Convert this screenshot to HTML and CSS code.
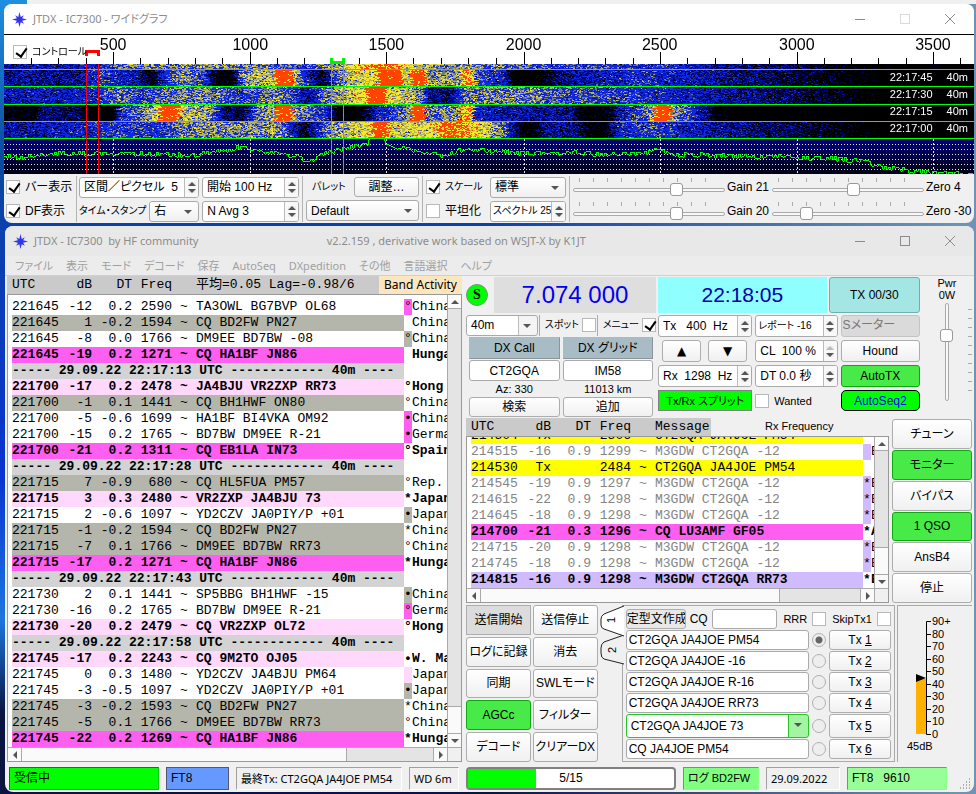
FILE: index.html
```html
<!DOCTYPE html>
<html lang="ja">
<head>
    <meta charset="UTF-8">
    <meta name="viewport" content="width=device-width, initial-scale=1.0">
    <title>JTDX</title>
    <link rel="stylesheet" href="styles.css">
</head>
<body>

    <!-- ワイドグラフ -->
    <section class="window wide-graph">
        <header class="titlebar">
            <svg class="logo" viewBox="0 0 16 16"><path d="M8 0l1.3 5.2L12.6 3.400 10.800 6.700 16 8l-5.200 1.300 1.800 3.300-3.300-1.800L8 16l-1.300-5.200-3.300 1.800 1.800-3.300L0 8l5.200-1.300L3.400 3.400l3.300 1.800z" fill="#3434e8"/></svg>
            <h1>JTDX - IC7300 - ワイドグラフ</h1>
            <div class="win-buttons">
                <button aria-label="最小化"><svg viewBox="0 0 12 12"><path d="M1 6.500h10"/></svg></button>
                <button aria-label="最大化" disabled><svg viewBox="0 0 12 12"><rect x="1.500" y="1.500" width="9" height="9"/></svg></button>
                <button aria-label="閉じる"><svg viewBox="0 0 12 12"><path d="M1 1l10 10M11 1L1 11"/></svg></button>
            </div>
        </header>

        <div class="plot">
            <canvas id="waterfall"></canvas>
            <label class="check plot-control"><input type="checkbox" checked><span class="small">コントロール</span></label>
            <div class="scale" id="scale">
                <span data-hz="500">500</span>
                <span data-hz="1000">1000</span>
                <span data-hz="1500">1500</span>
                <span data-hz="2000">2000</span>
                <span data-hz="2500">2500</span>
                <span data-hz="3000">3000</span>
                <span data-hz="3500">3500</span>
            </div>
            <div class="stamps">
                <p><span>22:17:45</span><span>40m</span></p>
                <p><span>22:17:30</span><span>40m</span></p>
                <p><span>22:17:15</span><span>40m</span></p>
                <p><span>22:17:00</span><span>40m</span></p>
            </div>
        </div>

        <div class="graph-controls">
            <div class="group checks">
                <label class="check"><input type="checkbox" checked>バー表示</label>
                <label class="check"><input type="checkbox" checked>DF表示</label>
            </div>
            <div class="group bins">
                <div class="line">
                    <div class="spin grow"><input type="text" value="区間／ピクセル  5" aria-label="区間／ピクセル"><div class="arrows"><button aria-label="増"></button><button aria-label="減"></button></div></div>
                    <div class="spin bin-right"><input type="text" value="開始 100 Hz" aria-label="開始"><div class="arrows"><button aria-label="増"></button><button aria-label="減"></button></div></div>
                </div>
                <div class="line">
                    <label class="small grow" for="stamp">タイム・スタンプ</label>
                    <div class="combo stamp-combo"><select id="stamp"><option>右</option></select></div>
                    <div class="spin bin-right"><input type="text" value="N Avg 3" aria-label="N Avg"><div class="arrows"><button aria-label="増"></button><button aria-label="減"></button></div></div>
                </div>
            </div>
            <div class="group palette">
                <div class="line"><label class="small palette-label" for="palette">パレット</label><button class="btn grow">調整…</button></div>
                <div class="combo"><select id="palette"><option>Default</option></select></div>
            </div>
            <div class="group flatten">
                <div class="line">
                    <label class="check grow"><input type="checkbox" checked><span class="small">スケール</span></label>
                    <div class="combo flatten-right"><select aria-label="スケール"><option>標準</option></select></div>
                </div>
                <div class="line">
                    <label class="check grow"><input type="checkbox">平坦化</label>
                    <div class="spin flatten-right"><input class="small" type="text" value="スペクトル 25" aria-label="スペクトル"><div class="arrows"><button aria-label="増"></button><button aria-label="減"></button></div></div>
                </div>
            </div>
            <div class="group sliders">
                <div class="slider"><input id="gain1" type="range" value="70"></div><label for="gain1">Gain 21</label>
                <div class="slider"><input id="zero1" type="range" value="54"></div><label for="zero1">Zero 4</label>
                <div class="slider"><input id="gain2" type="range" value="70"></div><label for="gain2">Gain 20</label>
                <div class="slider"><input id="zero2" type="range" value="20"></div><label for="zero2">Zero -30</label>
            </div>
        </div>
    </section>

    <!-- メインウィンドウ -->
    <section class="window main-window">
        <header class="titlebar">
            <svg class="logo" viewBox="0 0 16 16"><path d="M8 0l1.3 5.2L12.6 3.400 10.800 6.700 16 8l-5.200 1.300 1.800 3.300-3.300-1.800L8 16l-1.300-5.200-3.300 1.800 1.800-3.300L0 8l5.200-1.300L3.400 3.400l3.300 1.800z" fill="#3434e8"/></svg>
            <h1>JTDX - IC7300&nbsp; by HF community</h1>
            <p class="version">v2.2.159 , derivative work based on WSJT-X by K1JT</p>
            <div class="win-buttons">
                <button aria-label="最小化"><svg viewBox="0 0 12 12"><path d="M1 6.500h10"/></svg></button>
                <button aria-label="最大化"><svg viewBox="0 0 12 12"><rect x="1.500" y="1.500" width="9" height="9"/></svg></button>
                <button aria-label="閉じる"><svg viewBox="0 0 12 12"><path d="M1 1l10 10M11 1L1 11"/></svg></button>
            </div>
        </header>
        <nav class="menubar">
            <a href="#">ファイル</a><a href="#">表示</a><a href="#">モード</a><a href="#">デコード</a><a href="#">保存</a><a href="#">AutoSeq</a><a href="#">DXpedition</a><a href="#">その他</a><a href="#">言語選択</a><a href="#">ヘルプ</a>
        </nav>

        <div class="panes">
            <!-- バンドアクティビティ -->
            <div class="band-pane">
                <div class="list-head">
                    <span class="utc">UTC</span><span class="db">dB</span><span class="dt">DT</span><span class="freq">Freq</span><span class="avg">平均=0.05 Lag=-0.98/6</span>
                    <strong class="band-label">Band Activity</strong>
                </div>
                <div class="list-frame">
                    <div class="view">
                        <table class="decodes">
                            <colgroup><col class="utc"><col class="db"><col class="dt"><col class="freq"><col class="tilde"><col class="msg"><col class="mark"><col></colgroup>
                            <tr><td>221645</td><td>-12</td><td>0.2</td><td>2590</td><td>~</td><td>TA3OWL BG7BVP OL68</td><td class="cq">°</td><td>China</td></tr>
                            <tr class="gray"><td>221645</td><td>1</td><td>-0.2</td><td>1594</td><td>~</td><td>CQ BD2FW PN27</td><td></td><td>China</td></tr>
                            <tr><td>221645</td><td>-8</td><td>0.0</td><td>1766</td><td>~</td><td>DM9EE BD7BW -08</td><td class="worked">°</td><td>China</td></tr>
                            <tr class="hot"><td>221645</td><td>-19</td><td>0.2</td><td>1271</td><td>~</td><td>CQ HA1BF JN86</td><td></td><td>Hunga</td></tr>
                            <tr class="sep"><td colspan="6">----- 29.09.22 22:17:13 UTC ------------ 40m ----</td><td></td><td></td></tr>
                            <tr class="pink"><td>221700</td><td>-17</td><td>0.2</td><td>2478</td><td>~</td><td>JA4BJU VR2ZXP RR73</td><td>°</td><td>Hong</td></tr>
                            <tr class="gray"><td>221700</td><td>-1</td><td>0.1</td><td>1441</td><td>~</td><td>CQ BH1HWF ON80</td><td>°</td><td>China</td></tr>
                            <tr><td>221700</td><td>-5</td><td>-0.6</td><td>1699</td><td>~</td><td>HA1BF BI4VKA OM92</td><td class="cq">•</td><td>China</td></tr>
                            <tr><td>221700</td><td>-15</td><td>0.2</td><td>1765</td><td>~</td><td>BD7BW DM9EE R-21</td><td class="cq">•</td><td>Germa</td></tr>
                            <tr class="hot"><td>221700</td><td>-21</td><td>0.2</td><td>1311</td><td>~</td><td>CQ EB1LA IN73</td><td>°</td><td>Spain</td></tr>
                            <tr class="sep"><td colspan="6">----- 29.09.22 22:17:28 UTC ------------ 40m ----</td><td></td><td></td></tr>
                            <tr class="gray"><td>221715</td><td>7</td><td>-0.9</td><td>680</td><td>~</td><td>CQ HL5FUA PM57</td><td>°</td><td>Rep.</td></tr>
                            <tr class="pink"><td>221715</td><td>3</td><td>0.3</td><td>2480</td><td>~</td><td>VR2ZXP JA4BJU 73</td><td>*</td><td>Japan</td></tr>
                            <tr><td>221715</td><td>2</td><td>-0.6</td><td>1097</td><td>~</td><td>YD2CZV JA0PIY/P +01</td><td class="worked">•</td><td>Japan</td></tr>
                            <tr class="gray"><td>221715</td><td>-1</td><td>-0.2</td><td>1594</td><td>~</td><td>CQ BD2FW PN27</td><td>*</td><td>China</td></tr>
                            <tr class="gray"><td>221715</td><td>-7</td><td>0.1</td><td>1766</td><td>~</td><td>DM9EE BD7BW RR73</td><td>°</td><td>China</td></tr>
                            <tr class="hot"><td>221715</td><td>-17</td><td>0.2</td><td>1271</td><td>~</td><td>CQ HA1BF JN86</td><td>*</td><td>Hunga</td></tr>
                            <tr class="sep"><td colspan="6">----- 29.09.22 22:17:43 UTC ------------ 40m ----</td><td></td><td></td></tr>
                            <tr><td>221730</td><td>2</td><td>0.1</td><td>1441</td><td>~</td><td>SP5BBG BH1HWF -15</td><td class="worked">•</td><td>China</td></tr>
                            <tr><td>221730</td><td>-16</td><td>0.2</td><td>1765</td><td>~</td><td>BD7BW DM9EE R-21</td><td class="cq">°</td><td>Germa</td></tr>
                            <tr class="pink"><td>221730</td><td>-20</td><td>0.2</td><td>2479</td><td>~</td><td>CQ VR2ZXP OL72</td><td>°</td><td>Hong</td></tr>
                            <tr class="sep"><td colspan="6">----- 29.09.22 22:17:58 UTC ------------ 40m ----</td><td></td><td></td></tr>
                            <tr class="pink"><td>221745</td><td>-17</td><td>0.2</td><td>2243</td><td>~</td><td>CQ 9M2TO OJ05</td><td>•</td><td>W. Ma</td></tr>
                            <tr><td>221745</td><td>0</td><td>0.3</td><td>1480</td><td>~</td><td>YD2CZV JA4BJU PM64</td><td class="new"></td><td>Japan</td></tr>
                            <tr><td>221745</td><td>-3</td><td>-0.5</td><td>1097</td><td>~</td><td>YD2CZV JA0PIY/P +01</td><td class="worked">•</td><td>Japan</td></tr>
                            <tr class="gray"><td>221745</td><td>-3</td><td>-0.2</td><td>1593</td><td>~</td><td>CQ BD2FW PN27</td><td>*</td><td>China</td></tr>
                            <tr class="gray"><td>221745</td><td>-5</td><td>0.1</td><td>1766</td><td>~</td><td>DM9EE BD7BW RR73</td><td>°</td><td>China</td></tr>
                            <tr class="hot"><td>221745</td><td>-22</td><td>0.2</td><td>1269</td><td>~</td><td>CQ HA1BF JN86</td><td>*</td><td>Hunga</td></tr>
                        </table>
                    </div>
                    <div class="vscroll"><button class="up" aria-label="上へ"></button><div class="track"><div class="thumb band-thumb"></div></div><button class="down" aria-label="下へ"></button></div>
                    <div class="hscroll"><button class="left" aria-label="左へ"></button><div class="track"><div class="thumb"></div></div><button class="right" aria-label="右へ"></button></div>
                    <div class="corner"></div>
                </div>
            </div>

            <div class="right-pane">
                <div class="rig">
                    <div class="rig-left">
                        <div class="line dial"><span class="badge">S</span><output class="dial-freq">7.074 000</output></div>
                        <div class="line band-line">
                            <div class="combo boxed band-combo"><select aria-label="バンド"><option>40m</option></select></div>
                            <label class="check small spot">スポット<input type="checkbox"></label>
                            <label class="check small menu-check">メニュー<input type="checkbox" checked></label>
                        </div>
                        <div class="dx">
                            <button class="btn steel">DX Call</button><button class="btn steel">DX グリッド</button>
                            <input class="field" type="text" value="CT2GQA" aria-label="DX Call"><input class="field" type="text" value="IM58" aria-label="DX グリッド">
                            <span class="az">Az: 330</span><span class="az">11013 km</span>
                            <button class="btn">検索</button><button class="btn">追加</button>
                        </div>
                    </div>
                    <div class="rig-mid">
                        <div class="line clock-line"><output class="clock">22:18:05</output><button class="btn tx-slot">TX 00/30</button></div>
                        <div class="rig-grid">
                            <div class="spin"><input type="text" value="Tx   400  Hz" aria-label="Tx"><div class="arrows"><button aria-label="増"></button><button aria-label="減"></button></div></div>
                            <div class="spin"><input class="small" type="text" value="レポート -16" aria-label="レポート"><div class="arrows"><button aria-label="増"></button><button aria-label="減"></button></div></div>
                            <div class="s-meter">Sメーター</div>
                            <div class="line nudge"><button class="btn">▲</button><button class="btn">▼</button></div>
                            <div class="spin"><input type="text" value="CL  100 %" aria-label="CL"><div class="arrows at-max"><button aria-label="増"></button><button aria-label="減"></button></div></div>
                            <button class="btn">Hound</button>
                            <div class="spin"><input type="text" value="Rx  1298  Hz" aria-label="Rx"><div class="arrows"><button aria-label="増"></button><button aria-label="減"></button></div></div>
                            <div class="spin"><input type="text" value="DT 0.0 秒" aria-label="DT"><div class="arrows"><button aria-label="増"></button><button aria-label="減"></button></div></div>
                            <button class="btn green">AutoTX</button>
                            <button class="btn split">Tx/Rx スプリット</button>
                            <label class="check wanted"><input type="checkbox">Wanted</label>
                            <button class="btn autoseq">AutoSeq2</button>
                        </div>
                    </div>
                    <div class="pwr">
                        <label for="pwr">Pwr<br>0W</label>
                        <div class="pwr-slider"><input id="pwr" type="range" value="70"></div>
                    </div>
                </div>

                <div class="rx-area">
                    <div class="rx-pane">
                        <div class="rx-head">
                            <div class="list-head"><span class="utc">UTC</span><span class="db">dB</span><span class="dt">DT</span><span class="freq">Freq</span><span class="avg">Message</span></div>
                            <strong>Rx Frequency</strong>
                        </div>
                        <div class="list-frame">
                            <div class="view">
                                <table class="decodes">
                                    <colgroup><col class="utc"><col class="db"><col class="dt"><col class="freq"><col class="tilde"><col class="msg"><col class="mark"><col></colgroup>
                                    <tr class="tx"><td>214504</td><td>Tx</td><td></td><td>2506</td><td>~</td><td>CT2GQA JA4JOE PM54</td><td></td><td></td></tr>
                                    <tr class="old"><td>214515</td><td>-16</td><td>0.9</td><td>1299</td><td>~</td><td>M3GDW CT2GQA -12</td><td class="mine"></td><td>E</td></tr>
                                    <tr class="tx"><td>214530</td><td>Tx</td><td></td><td>2484</td><td>~</td><td>CT2GQA JA4JOE PM54</td><td></td><td></td></tr>
                                    <tr class="old"><td>214545</td><td>-19</td><td>0.9</td><td>1297</td><td>~</td><td>M3GDW CT2GQA -12</td><td class="mine">*</td><td>E</td></tr>
                                    <tr class="old"><td>214615</td><td>-22</td><td>0.9</td><td>1298</td><td>~</td><td>M3GDW CT2GQA -12</td><td class="mine">*</td><td>E</td></tr>
                                    <tr class="old"><td>214645</td><td>-18</td><td>0.9</td><td>1298</td><td>~</td><td>M3GDW CT2GQA -12</td><td class="mine">*</td><td>E</td></tr>
                                    <tr class="hot"><td>214700</td><td>-21</td><td>0.3</td><td>1296</td><td>~</td><td>CQ LU3AMF GF05</td><td>*</td><td>A</td></tr>
                                    <tr class="old"><td>214715</td><td>-20</td><td>0.9</td><td>1298</td><td>~</td><td>M3GDW CT2GQA -12</td><td class="mine">*</td><td>E</td></tr>
                                    <tr class="old"><td>214745</td><td>-18</td><td>0.9</td><td>1298</td><td>~</td><td>M3GDW CT2GQA -12</td><td class="mine">*</td><td>E</td></tr>
                                    <tr class="lilac"><td>214815</td><td>-16</td><td>0.9</td><td>1298</td><td>~</td><td>M3GDW CT2GQA RR73</td><td>*</td><td>E</td></tr>
                                </table>
                            </div>
                            <div class="vscroll"><button class="up" aria-label="上へ"></button><div class="track"><div class="thumb band-thumb"></div></div><button class="down" aria-label="下へ"></button></div>
                            <div class="hscroll"><button class="left" aria-label="左へ"></button><div class="track"><div class="thumb"></div></div><button class="right" aria-label="右へ"></button></div>
                            <div class="corner"></div>
                        </div>
                    </div>
                    <div class="side-buttons">
                        <button class="btn">チューン</button>
                        <button class="btn green">モニター</button>
                        <button class="btn">バイパス</button>
                        <button class="btn green">1 QSO</button>
                        <button class="btn">AnsB4</button>
                        <button class="btn">停止</button>
                    </div>
                </div>

                <div class="bottom">
                    <div class="actions">
                        <button class="btn pressed">送信開始</button><button class="btn">送信停止</button>
                        <button class="btn">ログに記録</button><button class="btn">消去</button>
                        <button class="btn">同期</button><button class="btn">SWLモード</button>
                        <button class="btn green">AGCc</button><button class="btn">フィルター</button>
                        <button class="btn">デコード</button><button class="btn">クリアーDX</button>
                    </div>
                    <svg class="tabs" viewBox="0 0 24 60">
                        <path d="M24 30L4 37Q1 39 1 43V48Q1 53 4 54L24 59" fill="#f0f0f0" stroke="#222"/>
                        <path d="M24 1L4 9Q1 11 1 14V20Q1 23 4 24L24 31" fill="#fff" stroke="#222"/>
                        <text x="0" y="0" transform="translate(15 18) rotate(-90)">1</text>
                        <text x="0" y="0" transform="translate(16 48) rotate(-90)">2</text>
                    </svg>
                    <div class="messages">
                        <div class="line cq-line">
                            <button class="btn gen">定型文作成</button>
                            <label for="cq">CQ</label><input class="field" id="cq" type="text">
                            <label class="check">RRR<input type="checkbox"></label>
                            <label class="check">SkipTx1<input type="checkbox"></label>
                        </div>
                        <div class="tx-rows">
                            <input class="field" type="text" value="CT2GQA JA4JOE PM54" aria-label="Tx 1"><input type="radio" name="tx" aria-label="Tx 1" checked><button class="btn">Tx <u>1</u></button>
                            <input class="field" type="text" value="CT2GQA JA4JOE -16" aria-label="Tx 2"><input type="radio" name="tx" aria-label="Tx 2"><button class="btn">Tx <u>2</u></button>
                            <input class="field" type="text" value="CT2GQA JA4JOE R-16" aria-label="Tx 3"><input type="radio" name="tx" aria-label="Tx 3"><button class="btn">Tx <u>3</u></button>
                            <input class="field" type="text" value="CT2GQA JA4JOE RR73" aria-label="Tx 4"><input type="radio" name="tx" aria-label="Tx 4"><button class="btn">Tx <u>4</u></button>
                            <div class="combo boxed tx5"><select aria-label="Tx 5"><option>CT2GQA JA4JOE 73</option></select></div><input type="radio" name="tx" aria-label="Tx 5"><button class="btn">Tx <u>5</u></button>
                            <input class="field" type="text" value="CQ JA4JOE PM54" aria-label="Tx 6"><input type="radio" name="tx" aria-label="Tx 6"><button class="btn">Tx <u>6</u></button>
                        </div>
                    </div>
                    <div class="meter">
                        <svg viewBox="0 0 74 156">
                            <rect x="18" y="73" width="10" height="55" fill="#ffb000"/>
                            <path d="M18 68l10 4-10 4z" fill="#000"/>
                            <path d="M33 15.500h-4.500v113H33M28.500 28.500H33M28.500 40.500H33M28.500 53.500H33M28.500 65.500H33M28.500 78.500H33M28.500 90.500H33M28.500 103.500H33M28.500 115.500H33" fill="none" stroke="#000"/>
                            <text x="34" y="19">90+</text>
                            <text x="34" y="32">80</text>
                            <text x="34" y="44">70</text>
                            <text x="34" y="57">60</text>
                            <text x="34" y="69">50</text>
                            <text x="34" y="82">40</text>
                            <text x="34" y="94">30</text>
                            <text x="34" y="107">20</text>
                            <text x="34" y="119">10</text>
                            <text x="34" y="132">0</text>
                            <text x="9" y="144">45dB</text>
                        </svg>
                    </div>
                </div>
            </div>
        </div>

        <footer class="statusbar">
            <div class="status-left">
                <span class="cell receiving">受信中</span>
                <span class="cell mode">FT8</span>
                <span class="cell last-tx">最終Tx: CT2GQA JA4JOE PM54</span>
                <span class="cell watchdog">WD 6m</span>
            </div>
            <div class="status-right">
                <div class="progress"><div class="bar" style="width: 33%"></div><span>5/15</span></div>
                <span class="cell logged">ログ BD2FW</span>
                <span class="cell date">29.09.2022</span>
                <span class="cell count">FT8&nbsp;&nbsp; 9610</span>
                <svg class="grip" viewBox="0 0 12 12"><path d="M10 1h1M7 4h1M10 4h1M4 7h1M7 7h1M10 7h1M1 10h1M4 10h1M7 10h1M10 10h1" stroke="#999" stroke-width="1.500"/></svg>
            </div>
        </footer>
    </section>

    <script src="waterfall.js"></script>
</body>
</html>
```

FILE: styles.css
```css
* {
    box-sizing: border-box;
}

body {
    margin: 0;
    height: 100vh;
    padding: 4px 2px 2px 4px;
    display: flex;
    flex-direction: column;
    gap: 3px;
    font-family: "Liberation Sans", "Noto Sans CJK JP", sans-serif;
    font-size: 12px;
    font-feature-settings: "palt";
    line-height: 14px;
    color: #000;
    background:
        linear-gradient(90deg, transparent 27px, #f0f0f0 27px) top / 100% 4px no-repeat,
        linear-gradient(90deg, transparent 50%, #6f93b4 98%),
        linear-gradient(180deg, #1f8fe0, #0a4aa0 20%, #0c3fae 30%, #0a34d0 60%, #1c76e0 78%, #0a1440 90%);
}

h1, p {
    margin: 0;
    font-weight: normal;
}

button, input, select {
    font: inherit;
    font-feature-settings: inherit;
    color: inherit;
    margin: 0;
    padding: 0;
    border: 0;
    min-width: 0;
    border-radius: 0;
}

.small {
    font-size: 10px;
    white-space: nowrap;
}

.grow {
    flex: 1;
}

.line {
    display: flex;
    align-items: center;
}

/* ウィンドウ枠 */
.window {
    flex: none;
    border-radius: 8px;
    overflow: hidden;
    background: #f0f0f0;
}

.titlebar {
    flex: none;
    height: 30px;
    display: flex;
    align-items: center;
    padding: 0 18px 0 8px;
    gap: 6px;
    background: #fff;
    color: #8c8c8c;
    font-family: "Noto Sans", "Noto Sans CJK JP", sans-serif;
    font-size: 11px;
}

.titlebar h1 {
    font-size: 11px;
    flex: 287;
}

.version {
    flex: 522;
}

.logo {
    width: 15px;
    height: 15px;
}

.win-buttons {
    display: flex;
    gap: 33px;
}

.win-buttons button {
    width: 12px;
    height: 12px;
    background: none;
}

.win-buttons svg {
    display: block;
    fill: none;
    stroke: #8c8c8c;
}

.win-buttons button:disabled {
    opacity: 0.3;
}

/* ワイドグラフ */
.plot {
    position: relative;
    height: 140px;
    border-top: 1px solid #000;
}

.plot canvas {
    display: block;
    width: 100%;
    height: 139px;
}

.plot-control {
    position: absolute;
    left: 9px;
    top: 10px;
}

.scale span {
    position: absolute;
    top: 1px;
    font-size: 16px;
    line-height: 18px;
    transform: translateX(-50%);
}

.stamps {
    position: absolute;
    right: 6px;
    top: 34px;
    color: #fff;
    font-size: 11px;
}

.stamps p {
    display: flex;
    gap: 14px;
    height: 17px;
    line-height: 17px;
}

.graph-controls {
    display: flex;
    padding: 2px 2px 1px 2px;
}

.group {
    display: flex;
    flex-direction: column;
    gap: 2px;
    padding: 0 3px;
    border-left: 1px solid #b4b4b4;
}

.group > * {
    height: 22px;
}

.group .line {
    gap: 3px;
}

.checks {
    width: 70px;
    padding: 0;
    border: 0;
}

.bins {
    width: 226px;
    padding-left: 2px;
}

.bin-right {
    width: 97px;
}

.stamp-combo {
    width: 50px;
}

.palette {
    width: 120px;
}

.palette-label {
    width: 45px;
    padding-left: 6px;
}

.flatten {
    width: 147px;
}

.flatten-right {
    width: 76px;
}

.sliders {
    flex: 1;
    display: grid;
    grid-template-columns: 1fr 43px 1fr 46px;
    align-items: center;
    padding-right: 0;
    padding-left: 3px;
    column-gap: 2px;
}

.sliders label {
    white-space: nowrap;
    line-height: 22px;
}

.slider {
    padding-top: 7px;
    background: repeating-linear-gradient(90deg, #aaa 0 1px, transparent 1px 10%) 6px 2px / calc(100% - 12px) 4px no-repeat;
}

/* 入力部品 */
.btn {
    display: block;
    border: 1px solid #adadad;
    border-radius: 3px;
    background: linear-gradient(#fff, #f0f0f0);
    text-align: center;
    white-space: nowrap;
    overflow: hidden;
}

.line .btn {
    height: 20px;
}

.btn.green {
    background: #48ea48;
    border-color: #10a810;
}

.btn.pressed {
    background: #dcdcdc;
    border-radius: 0;
}

.btn.steel {
    background: #a8bcc6;
    border-radius: 0;
    border-color: #a8bcc6 #8a9499 #8a9499 #a8bcc6;
}

.field {
    width: 100%;
    border: 1px solid #aaa;
    border-radius: 3px;
    background: #fff;
}

.check {
    display: flex;
    align-items: center;
    gap: 5px;
    white-space: nowrap;
}

input[type="checkbox"] {
    appearance: none;
    position: relative;
    width: 14px;
    height: 14px;
    flex: none;
    border: 1px solid #b8b8b8;
    background: #fff;
}

input[type="checkbox"]:checked::after {
    content: "";
    position: absolute;
    left: 4px;
    top: 0;
    width: 5px;
    height: 9px;
    border: solid #000;
    border-width: 0 2px 2px 0;
    transform: rotate(35deg);
}

input[type="radio"] {
    appearance: none;
    width: 14px;
    height: 14px;
    border: 1px solid #b0b0b0;
    border-radius: 50%;
    background: #eee;
}

input[type="radio"]:checked {
    background: radial-gradient(circle, #666 3px, #eee 4px);
}

input[type="range"] {
    appearance: none;
    display: block;
    width: 100%;
    height: 14px;
    background: none;
}

input[type="range"]::-webkit-slider-runnable-track {
    height: 4px;
    border: 1px solid #aaa;
    border-radius: 2px;
    background: #f8f8f8;
}

input[type="range"]::-webkit-slider-thumb {
    appearance: none;
    width: 13px;
    height: 13px;
    margin-top: -6px;
    border: 1px solid #999;
    border-radius: 3px;
    background: #fff;
}

.spin {
    display: flex;
    height: 21px;
    border: 1px solid #aaa;
    border-radius: 3px;
    background: #fff;
    overflow: hidden;
}

.spin input {
    flex: 1;
    width: 0;
    padding-left: 4px;
    background: none;
    white-space: pre;
}

.spin input.small {
    padding-left: 2px;
}

.arrows {
    width: 14px;
    flex: none;
    border-left: 1px solid #bbb;
    display: flex;
    flex-direction: column;
    align-items: center;
    justify-content: center;
    gap: 3px;
    background: #f8f8f8;
}

.arrows button {
    border: 4px solid transparent;
    border-top: 0;
    border-bottom: 4px solid #555;
}

.arrows button + button {
    border-bottom: 0;
    border-top: 4px solid #555;
}

.at-max button:first-child {
    border-bottom-color: #bbb;
}

.combo {
    position: relative;
    height: 21px;
}

.combo select {
    appearance: none;
    width: 100%;
    height: 100%;
    padding-left: 4px;
    border: 1px solid #aaa;
    border-radius: 3px;
    background: linear-gradient(#fff, #f0f0f0);
}

.combo::after {
    content: "";
    position: absolute;
    right: 7px;
    top: 9px;
    border: 4px solid transparent;
    border-top: 4px solid #555;
    border-bottom: 0;
    pointer-events: none;
}

.combo.boxed select {
    background: linear-gradient(90deg, #bbb 1px, #f4f4f4 1px) right / 19px 100% no-repeat #fff;
}

/* メインウィンドウ */
.main-window {
    flex: 1;
    min-height: 0;
    margin-left: 1px;
    display: flex;
    flex-direction: column;
}

.main-window .titlebar {
    background: #e8e8e8;
}

.menubar {
    flex: none;
    height: 20px;
    display: flex;
    align-items: center;
    gap: 13px;
    padding-left: 10px;
    border-bottom: 1px solid #d0d0d0;
    background: #ececec;
    font-family: "Noto Sans", "Noto Sans CJK JP", sans-serif;
    font-size: 11px;
}

.menubar a {
    color: #a0a0a0;
    text-decoration: none;
}

.panes {
    flex: 1;
    min-height: 0;
    display: flex;
    gap: 4px;
    padding: 0 2px 2px;
}

.band-pane {
    flex: 455;
    min-width: 0;
    min-height: 0;
    display: flex;
    flex-direction: column;
}

.right-pane {
    flex: 506;
    min-width: 0;
    min-height: 0;
    display: flex;
    flex-direction: column;
}

/* デコード一覧 */
.list-head {
    flex: none;
    height: 18px;
    display: flex;
    padding-left: 5px;
    background: #cacaca;
    font-family: "Liberation Mono", "Noto Sans CJK JP", monospace;
    font-size: 13px;
    line-height: 18px;
    white-space: nowrap;
}

.list-head .db, .list-head .dt, .list-head .freq {
    text-align: right;
}

.utc {
    width: 48px;
}

.db {
    width: 32px;
}

.dt, .freq {
    width: 40px;
}

.tilde {
    width: 24px;
}

.msg {
    width: 208px;
}

.mark {
    width: 8px;
}

.avg {
    flex: 1;
    padding-left: 24px;
}

.band-label {
    width: 83px;
    background: #fbe6c0;
    font-family: "Noto Sans", sans-serif;
    font-size: 12px;
    font-weight: normal;
    text-align: center;
}

.list-frame {
    flex: 1;
    min-height: 0;
    display: grid;
    grid-template: minmax(0, 1fr) 14px / minmax(0, 1fr) 14px;
    border: 1px solid #999;
    background: #fff;
}

.view {
    display: flex;
    flex-direction: column;
    justify-content: flex-end;
    min-height: 0;
    overflow: hidden;
    padding-left: 4px;
}

.decodes {
    flex: none;
    width: 100%;
    table-layout: fixed;
    border-collapse: collapse;
    font-family: "Liberation Mono", monospace;
    font-size: 13px;
    line-height: 16px;
}

.decodes td {
    height: 16px;
    padding: 0;
    white-space: pre;
    overflow: hidden;
}

.decodes td:nth-child(2), .decodes td:nth-child(3), .decodes td:nth-child(4) {
    text-align: right;
}

.decodes td:nth-child(5) {
    text-align: center;
}

.decodes .sep td {
    text-align: left;
}

.hot, .pink, .sep, .lilac {
    font-weight: bold;
}

.hot td:nth-child(-n+6), .cq {
    background: #ff5ff0;
}

.pink td:nth-child(-n+6), .new {
    background: #ffd8fc;
}

.gray td:nth-child(-n+6), .worked {
    background: #b4b6ac;
}

.lilac td:nth-child(-n+6), .mine {
    background: #d0bbff;
}

.tx td:nth-child(-n+6) {
    background: #ff0;
}

.sep td:first-child {
    background: #d3d3d3;
}

.old td:nth-child(-n+6) {
    color: #848484;
}

.vscroll, .hscroll {
    display: flex;
    background: #fafafa;
    border-left: 1px solid #aaa;
}

.vscroll {
    flex-direction: column;
}

.hscroll {
    border-left: 0;
    border-top: 1px solid #aaa;
}

.vscroll button, .hscroll button {
    width: 13px;
    height: 13px;
    display: flex;
    align-items: center;
    justify-content: center;
    background: #fafafa;
}

.vscroll button::before, .hscroll button::before {
    content: "";
    border: 4px solid transparent;
}

.vscroll .up::before {
    border-top: 0;
    border-bottom-color: #555;
}

.vscroll .down::before {
    border-bottom: 0;
    border-top-color: #555;
}

.hscroll .left::before {
    border-left: 0;
    border-right-color: #555;
}

.hscroll .right::before {
    border-right: 0;
    border-left-color: #555;
}

.track {
    flex: 1;
    display: flex;
    background: #e4e4e4;
    border: solid #aaa;
    border-width: 0 1px;
}

.vscroll .track {
    flex-direction: column;
    justify-content: flex-end;
    border-width: 1px 0;
}

.hscroll .thumb {
    width: 79%;
    background: #fafafa;
    border-right: 1px solid #aaa;
}

.band-thumb {
    height: 27px;
    background: #fafafa;
    border-top: 1px solid #aaa;
}

.corner {
    border: solid #aaa;
    border-width: 1px 0 0 1px;
    background: #f0f0f0;
}

/* リグ操作 */
.rig {
    flex: none;
    display: flex;
    gap: 2px;
    height: 142px;
    padding-top: 1px;
}

.rig-left {
    flex: 190;
    min-width: 0;
}

.rig-mid {
    flex: 262;
    min-width: 0;
}

.dial {
    height: 36px;
    gap: 6px;
}

.badge {
    width: 22px;
    height: 22px;
    border: 1px solid #6c9a6c;
    border-radius: 50%;
    background: #0f0;
    font: bold 14px/20px "Liberation Serif", serif;
    text-align: center;
}

.dial-freq {
    flex: 1;
    background: #dedede;
    color: #0000f0;
    font-size: 24px;
    line-height: 36px;
    text-align: center;
}

.band-line {
    height: 24px;
    justify-content: space-between;
}

.band-combo {
    width: 72px;
}

.spot, .menu-check {
    gap: 3px;
    height: 21px;
    padding-left: 5px;
    border-left: 1px solid #aaa;
}

.dx {
    display: grid;
    grid-template-columns: 1fr 1fr;
    grid-template-rows: 22px 21px 14px 20px;
    gap: 1px 3px;
    padding: 0 3px;
}

.dx .field {
    text-align: center;
}

.az {
    font-size: 11px;
    text-align: center;
}

.clock-line {
    height: 36px;
    gap: 2px;
}

.clock {
    flex: 170;
    background: #90ffff;
    color: #0000a8;
    font-size: 21px;
    line-height: 36px;
    text-align: center;
}

.clock-line .tx-slot {
    flex: 90;
    height: 36px;
    background: #a4e6e4;
    border-color: #6fb0ae;
}

.rig-grid {
    display: grid;
    grid-template-columns: 95fr 83fr 80fr;
    grid-template-rows: 22px 22px 22px 21px;
    gap: 3px;
    padding-top: 2px;
}

.rig-grid > .spin {
    height: 22px;
}

.s-meter {
    padding: 0 1px;
    border: 1px solid #c4c4c4;
    border-radius: 3px;
    background: #dadada;
    color: #777;
    line-height: 18px;
}

.nudge {
    gap: 7px;
    padding: 0 5px 0 4px;
}

.nudge .btn {
    flex: 1;
    height: 22px;
    font-family: "DejaVu Sans", sans-serif;
}

.split {
    background: #0f0;
    border-color: #808080;
    border-radius: 0;
    font-size: 11px;
}

.autoseq {
    background: #0f0;
    border-color: #000;
    border-radius: 5px;
    color: #0000ff;
}

.wanted {
    font-size: 11px;
}

.pwr {
    flex: 50;
    display: flex;
    flex-direction: column;
    font-size: 11px;
    line-height: 12px;
    text-align: center;
}

.pwr-slider {
    height: 98px;
    margin-top: 2px;
    display: flex;
    justify-content: center;
    background: repeating-linear-gradient(#aaa 0 1px, transparent 1px 9px) right 6px / 4px 84px no-repeat;
}

.pwr-slider input[type="range"] {
    writing-mode: vertical-lr;
    direction: rtl;
    width: 14px;
    height: 98px;
}

.pwr-slider input[type="range"]::-webkit-slider-runnable-track {
    width: 4px;
    height: 100%;
}

.pwr-slider input[type="range"]::-webkit-slider-thumb {
    margin-top: 0;
    margin-left: -6px;
}

/* Rx Frequency */
.rx-area {
    flex: 1;
    min-height: 0;
    display: flex;
    gap: 3px;
}

.rx-pane {
    flex: 423;
    min-width: 0;
    min-height: 0;
    display: flex;
    flex-direction: column;
}

.rx-head {
    display: flex;
    gap: 54px;
}

.rx-head .list-head {
    width: 245px;
}

.rx-head strong {
    font-size: 11px;
    font-weight: normal;
    line-height: 16px;
}

.side-buttons {
    flex: 80;
    display: grid;
    grid-auto-rows: 1fr;
    gap: 1px;
    padding-top: 1px;
}

/* 下段 */
.bottom {
    flex: none;
    height: 159px;
    padding: 2px 0 0;
    display: flex;
    gap: 2px;
}

.actions {
    flex: 134;
    display: grid;
    grid-template-columns: 1fr 1fr;
    grid-auto-rows: 1fr;
    gap: 2px;
}

.tabs {
    position: relative;
    width: 24px;
    height: 60px;
    margin-right: -4px;
    font-size: 11px;
}

.messages {
    flex: 270;
    min-width: 0;
    padding: 2px 3px;
    border: 1px solid #aaa;
    display: flex;
    flex-direction: column;
    gap: 1px;
}

.cq-line {
    height: 21px;
    gap: 4px;
}

.cq-line .gen {
    width: 60px;
    background: #e8e8e8;
}

.cq-line .field {
    flex: 1;
    height: 20px;
}

.cq-line .check {
    font-size: 11px;
    padding-left: 2px;
}

.tx-rows {
    display: grid;
    grid-template-columns: 1fr 14px 62px;
    grid-template-rows: 20px 20px 20px 20px 24px 20px;
    gap: 1px 3px;
    align-items: center;
}

.tx-rows > * {
    height: 100%;
}

.tx-rows input[type="radio"] {
    height: 14px;
}

.tx-rows .field {
    padding: 0 2px;
}

.tx5.boxed select {
    border-color: #28c428;
    background: linear-gradient(90deg, #28c428 1px, #a4f4a4 1px) right / 20px 100% no-repeat #fff;
}

.meter {
    flex: 75;
    border: solid #aaa;
    border-width: 1px 0 0 1px;
}

.meter svg {
    display: block;
    width: 74px;
    height: 156px;
    font-size: 11px;
}

/* ステータスバー */
.statusbar {
    flex: none;
    height: 28px;
    display: flex;
    gap: 7px;
    padding: 3px 3px 2px 4px;
}

.status-left, .status-right {
    display: flex;
    gap: 7px;
    align-items: stretch;
}

.status-left {
    flex: 450;
}

.status-right {
    flex: 505;
}

.cell {
    padding: 0 4px;
    border: 1px solid;
    border-color: #a0a0a0 #fff #fff #a0a0a0;
    line-height: 21px;
    white-space: nowrap;
}

.receiving {
    flex: 1;
    background: #0f0;
    border-color: #080 #0c0 #0c0 #080;
}

.mode {
    width: 63px;
    background: #6699ff;
    border-color: #557;
}

.last-tx, .watchdog, .date {
    font-family: "Noto Sans", "Noto Sans CJK JP", sans-serif;
    font-size: 11px;
}

.last-tx {
    width: 166px;
}

.watchdog {
    width: 50px;
}

.progress {
    position: relative;
    flex: 1;
    border: 2px solid #808080;
    border-radius: 4px;
    background: #fff;
}

.progress .bar {
    height: 100%;
    background: #0f0;
}

.progress span {
    position: absolute;
    inset: 0;
    line-height: 18px;
    text-align: center;
}

.logged {
    width: 76px;
    background: #80ff80;
    border-color: #5a5 #8f8 #8f8 #5a5;
    font-size: 11px;
}

.date {
    width: 74px;
}

.count {
    width: 100px;
    background: #98ff98;
    border-color: #5a5 #8f8 #8f8 #5a5;
}

.grip {
    width: 12px;
    height: 12px;
    margin-left: 5px;
    align-self: flex-end;
}
```

FILE: waterfall.js
```js
const canvas = document.getElementById('waterfall');
const ctx = canvas.getContext('2d');

const BASE = 969;        // width the profiles are given in
const SCALE_H = 29;      // frequency scale
const FALL_H = 75;       // waterfall
const HEIGHT = 139;

// one band for each receive period: [top, bottom, [x, level, ...]]
const bands = [
    [0, 5, [0, .33, 90, .42, 120, .6, 240, .62, 300, .5, 350, .8, 366, .97, 386, .97, 400, .75, 440, .6, 470, .6, 560, .5, 650, .5, 700, .35, 800, .2, 870, .02]],
    [6, 22, [0, .33, 70, .3, 95, .5, 130, .38, 146, .12, 160, .5, 180, .62, 200, .48, 212, .05, 224, .05, 238, .64, 268, .72, 271, 1.1, 286, 1.1, 289, .7, 306, .35, 316, .12, 328, .5, 346, .72, 371, .78, 374, 1.1, 395, 1.1, 397, .74, 405, .7, 407, 1.1, 419, 1.1, 421, .62, 454, .64, 456, .96, 466, .92, 470, .56, 497, .42, 510, .05, 530, .02, 548, .25, 600, .4, 640, .46, 690, .36, 750, .27, 820, .15, 880, 0]],
    [23, 40, [0, .37, 80, .4, 115, .58, 135, .5, 170, .6, 200, .6, 235, .5, 276, .62, 292, .48, 304, .28, 320, .58, 346, .72, 362, .8, 365, 1.1, 380, 1.1, 384, .76, 415, .65, 425, .32, 446, .26, 462, .6, 530, .58, 600, .5, 650, .46, 700, .36, 750, .3, 820, .18, 880, 0]],
    [41, 57, [0, .08, 30, .08, 36, .28, 76, .22, 88, 0, 108, 0, 116, .5, 140, .6, 153, .72, 156, 1.1, 173, 1.1, 176, .72, 208, .6, 218, .28, 236, .18, 252, .58, 269, .66, 271, 1.1, 286, 1.1, 288, .64, 322, .45, 332, .05, 352, .02, 372, .42, 405, .6, 407, 1.1, 419, 1.1, 421, .58, 454, .62, 456, .93, 466, .93, 470, .42, 500, .34, 566, .32, 578, .05, 602, .08, 614, .38, 640, .56, 648, .66, 650, 1.1, 664, 1.1, 667, .64, 685, .5, 700, .28, 715, .05, 730, 0]],
    [58, 74, [0, .34, 80, .42, 115, .52, 156, .48, 176, .6, 276, .62, 286, .42, 298, .2, 310, .35, 322, .6, 346, .72, 366, .8, 369, 1.05, 382, 1.05, 386, .72, 428, .76, 438, 1, 452, 1, 470, .82, 480, .72, 498, .6, 508, .3, 518, .1, 530, .1, 540, .35, 572, .3, 582, .08, 598, .08, 612, .42, 650, .5, 680, .4, 740, .3, 820, .16, 880, 0]]
];

// averaged spectrum, x and y
const spectrum = [0, 17, 16, 19, 40, 15, 100, 14, 190, 16, 222, 11, 236, 7, 258, 13, 280, 14, 304, 22, 318, 14, 345, 8, 363, 5, 366, -4, 377, -4, 381, 6, 410, 11, 438, 17, 462, 8, 482, 12, 520, 14, 560, 13, 600, 15, 640, 14, 655, 9, 664, 15, 700, 16, 780, 18, 826, 19, 858, 22, 880, 28, 910, 32, 930, 34, 969, 35];

let seed = 7300;

function random() {
    seed = (seed * 1664525 + 1013904223) % 4294967296;
    return seed / 4294967296;
}

function valueAt(points, x) {
    for (let i = 0; i < points.length - 2; i += 2) {
        if (x < points[i + 2]) {
            const t = (x - points[i]) / (points[i + 2] - points[i]);
            return points[i + 1] + t * (points[i + 3] - points[i + 1]);
        }
    }
    return points[points.length - 1];
}

function color(v) {
    if (v < 0.2) return '#000000';
    if (v < 0.3) return '#000450';
    if (v < 0.4) return '#0010a0';
    if (v < 0.56) return '#1028e0';
    if (v < 0.63) return '#6a7690';
    if (v < 0.74) return '#b4b45c';
    if (v < 0.93) return '#f4e828';
    return '#ff4400';
}

function hzToX(hz) {
    return Math.round(109 + (hz - 500) * 0.273);
}

function drawScale(k) {
    ctx.fillStyle = '#fff';
    ctx.fillRect(0, 0, canvas.width, SCALE_H);
    ctx.fillStyle = '#000';
    for (let hz = 200; hz <= 3600; hz += 100) {
        const h = hz % 500 === 0 ? 12 : 6;
        ctx.fillRect(Math.round(hzToX(hz) * k), SCALE_H - h, 1, h);
    }
}

function drawWaterfall() {
    const k = canvas.width / BASE;
    ctx.fillStyle = '#000';
    ctx.fillRect(0, SCALE_H, canvas.width, FALL_H);
    for (const [top, bottom, points] of bands) {
        for (let y = top; y < bottom; y++) {
            const shift = (random() - 0.5) * 6;
            let x = 0;
            while (x < canvas.width) {
                const w = random() < 0.5 ? 1 : 2;
                const base = valueAt(points, x / k + shift);
                const v = base <= 0 ? 0 : base + (random() + random() - 1) * 0.24;
                ctx.fillStyle = color(v);
                ctx.fillRect(x, SCALE_H + y, w, 1);
                x += w;
            }
        }
        ctx.fillStyle = '#00ff00';
        ctx.fillRect(0, SCALE_H + bottom, canvas.width, 1);
    }
}

function drawSpectrum(k) {
    const top = SCALE_H + FALL_H;
    const fill = ctx.createLinearGradient(0, top, 0, HEIGHT);
    fill.addColorStop(0, '#00007c');
    fill.addColorStop(1, '#000010');
    ctx.fillStyle = fill;
    ctx.fillRect(0, top, canvas.width, HEIGHT - top);

    ctx.fillStyle = '#e8e8e8';
    for (let y = top + 5; y < HEIGHT; y += 5) {
        for (let x = 0; x < canvas.width; x += 3) {
            ctx.fillRect(x, y, 1, 1);
        }
    }
    for (let hz = 500; hz <= 3500; hz += 500) {
        for (let y = top; y < HEIGHT; y += 4) {
            ctx.fillRect(Math.round(hzToX(hz) * k), y, 1, 2);
        }
    }

    // one upright run of pixels per column keeps the trace crisp
    ctx.fillStyle = '#00ff00';
    let last = null;
    let jitter = 0;
    for (let x = 0; x < canvas.width; x++) {
        if (x % 2 === 0) {
            jitter = (random() - 0.5) * 5;
        }
        const y = Math.round(top + valueAt(spectrum, x / k) + jitter);
        const from = last === null ? y : last;
        const start = Math.max(top, Math.min(from, y));
        const end = Math.max(from, y, start - 1);
        const length = Math.max(from, y) < top ? 0 : Math.max(1, end - start);
        ctx.fillRect(x, start, 1, Math.max(0, Math.min(length, HEIGHT - start)));
        last = y;
    }
}

// bracket over the scale with two lines running down the graph
function drawMarker(x, y, stroke, down) {
    ctx.fillStyle = stroke;
    ctx.fillRect(x, y, 15, 3);
    ctx.fillRect(x, down ? y : y - 3, 3, 6);
    ctx.fillRect(x + 12, down ? y : y - 3, 3, 6);
    ctx.fillRect(x + 1, SCALE_H, 1, HEIGHT - SCALE_H);
    ctx.fillRect(x + 13, SCALE_H, 1, HEIGHT - SCALE_H);
}

function draw() {
    seed = 7300;
    canvas.width = canvas.clientWidth;
    canvas.height = HEIGHT;
    const k = canvas.width / BASE;
    drawScale(k);
    drawWaterfall();
    drawSpectrum(k);
    drawMarker(Math.round(81 * k), 15, '#ff0000', true);
    drawMarker(Math.round(326 * k), SCALE_H - 3, '#00f000', false);
    document.querySelectorAll('#scale span').forEach(label => {
        label.style.left = hzToX(Number(label.dataset.hz)) * k + 'px';
    });
}

window.addEventListener('resize', draw);
draw();
```
